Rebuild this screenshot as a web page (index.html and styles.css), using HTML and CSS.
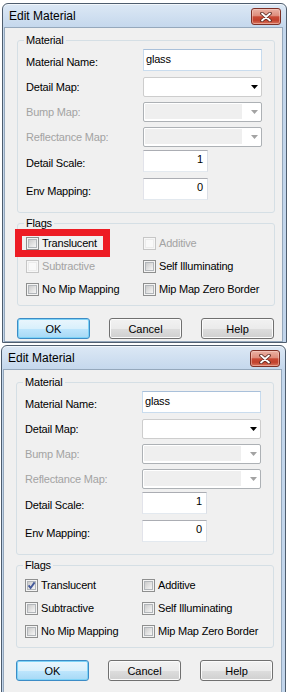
FILE: index.html
```html
<!DOCTYPE html>
<html>
<head>
<meta charset="utf-8">
<title>Edit Material</title>
<link rel="stylesheet" href="styles.css">
</head>
<body>
<div class="window w1">
  <div class="titlebar">
    <span class="title">Edit Material</span>
    <span class="close"><svg width="12" height="10" viewBox="0 0 12 10"><path d="M2 1.5 L10 8.5 M10 1.5 L2 8.5" stroke="#5b2a22" stroke-width="3.6" stroke-linecap="round"/><path d="M2 1.5 L10 8.5 M10 1.5 L2 8.5" stroke="#ffffff" stroke-width="1.8" stroke-linecap="round"/></svg></span>
  </div>
  <div class="client">
    <fieldset class="group material">
      <legend>Material</legend>
      <div class="rows">
        <div class="row r-name"><span class="lbl lbl-edit">Material Name:</span><div class="edit wide focus">glass</div></div>
        <div class="row r-detail"><span class="lbl">Detail Map:</span><div class="combo"><svg class="arrow" width="7" height="4" viewBox="0 0 7 4"><polygon points="0,0 7,0 3.5,4" fill="#000"/></svg></div></div>
        <div class="row r-bump"><span class="lbl dis">Bump Map:</span><div class="combo disabled"><span class="combo-field"></span><svg class="arrow" width="7" height="4" viewBox="0 0 7 4"><polygon points="0,0 7,0 3.5,4" fill="#a3a3a3"/></svg></div></div>
        <div class="row r-refl"><span class="lbl dis">Reflectance Map:</span><div class="combo disabled"><span class="combo-field"></span><svg class="arrow" width="7" height="4" viewBox="0 0 7 4"><polygon points="0,0 7,0 3.5,4" fill="#a3a3a3"/></svg></div></div>
        <div class="row r-scale"><span class="lbl lbl-edit">Detail Scale:</span><div class="edit num">1</div></div>
        <div class="row r-env"><span class="lbl lbl-edit">Env Mapping:</span><div class="edit num">0</div></div>
      </div>
    </fieldset>
    <fieldset class="group flags">
      <legend>Flags</legend>
      <div class="checks">
        <div class="chk annotated"><span class="cb"></span><span>Translucent</span><span class="annot"></span></div>
        <div class="chk dis"><span class="cb off"></span><span>Additive</span></div>
        <div class="chk dis"><span class="cb off"></span><span>Subtractive</span></div>
        <div class="chk"><span class="cb"></span><span>Self Illuminating</span></div>
        <div class="chk"><span class="cb"></span><span>No Mip Mapping</span></div>
        <div class="chk"><span class="cb"></span><span>Mip Map Zero Border</span></div>
      </div>
    </fieldset>
    <div class="buttons">
      <button class="btn default">OK</button>
      <button class="btn">Cancel</button>
      <button class="btn">Help</button>
    </div>
  </div>
</div>

<div class="window w2">
  <div class="titlebar">
    <span class="title">Edit Material</span>
    <span class="close"><svg width="12" height="10" viewBox="0 0 12 10"><path d="M2 1.5 L10 8.5 M10 1.5 L2 8.5" stroke="#5b2a22" stroke-width="3.6" stroke-linecap="round"/><path d="M2 1.5 L10 8.5 M10 1.5 L2 8.5" stroke="#ffffff" stroke-width="1.8" stroke-linecap="round"/></svg></span>
  </div>
  <div class="client">
    <fieldset class="group material">
      <legend>Material</legend>
      <div class="rows">
        <div class="row r-name"><span class="lbl lbl-edit">Material Name:</span><div class="edit wide focus">glass</div></div>
        <div class="row r-detail"><span class="lbl">Detail Map:</span><div class="combo"><svg class="arrow" width="7" height="4" viewBox="0 0 7 4"><polygon points="0,0 7,0 3.5,4" fill="#000"/></svg></div></div>
        <div class="row r-bump"><span class="lbl dis">Bump Map:</span><div class="combo disabled"><span class="combo-field"></span><svg class="arrow" width="7" height="4" viewBox="0 0 7 4"><polygon points="0,0 7,0 3.5,4" fill="#a3a3a3"/></svg></div></div>
        <div class="row r-refl"><span class="lbl dis">Reflectance Map:</span><div class="combo disabled"><span class="combo-field"></span><svg class="arrow" width="7" height="4" viewBox="0 0 7 4"><polygon points="0,0 7,0 3.5,4" fill="#a3a3a3"/></svg></div></div>
        <div class="row r-scale"><span class="lbl lbl-edit">Detail Scale:</span><div class="edit num">1</div></div>
        <div class="row r-env"><span class="lbl lbl-edit">Env Mapping:</span><div class="edit num">0</div></div>
      </div>
    </fieldset>
    <fieldset class="group flags">
      <legend>Flags</legend>
      <div class="checks">
        <div class="chk"><span class="cb on"><svg class="tick" width="13" height="13" viewBox="0 0 13 13"><path d="M3.6 6.4 L5.6 9 L9.6 3.4" fill="none" stroke="#44599a" stroke-width="1.9"/></svg></span><span>Translucent</span></div>
        <div class="chk"><span class="cb"></span><span>Additive</span></div>
        <div class="chk"><span class="cb"></span><span>Subtractive</span></div>
        <div class="chk"><span class="cb"></span><span>Self Illuminating</span></div>
        <div class="chk"><span class="cb"></span><span>No Mip Mapping</span></div>
        <div class="chk"><span class="cb"></span><span>Mip Map Zero Border</span></div>
      </div>
    </fieldset>
    <div class="buttons">
      <button class="btn default">OK</button>
      <button class="btn">Cancel</button>
      <button class="btn">Help</button>
    </div>
  </div>
</div>
</body>
</html>
```

FILE: styles.css
```css
html, body {
  margin: 0;
  padding: 0;
  background: #ffffff;
}
body {
  height: 692px;
  overflow: hidden;
  font-family: "Liberation Sans", Arial, sans-serif;
  font-size: 11px;
  letter-spacing: -0.2px;
  color: #000;
}

.window {
  width: 285px;
  box-sizing: border-box;
  border: 1px solid #4e5d6e;
  border-radius: 6px 6px 0 0;
  background: linear-gradient(#dce8f5, #c4d7ec 24px, #c2d5eb);
  padding: 0 3px 0 1px;
  box-shadow: inset 0 1px 0 #f2f7fc;
}
.w1 {
  margin: 3px 0 0 2px;
}
.w2 {
  margin: 2px 0 0 1px;
}

.titlebar {
  height: 23px;
  display: flex;
  justify-content: space-between;
  align-items: flex-start;
}
.title {
  font-family: "Liberation Sans", Arial, sans-serif;
  font-size: 12px;
  letter-spacing: 0;
  line-height: 15px;
  padding: 5px 0 0 5px;
  color: #000;
}
.close {
  width: 30px;
  height: 17px;
  box-sizing: border-box;
  margin: 4px 2px 0 0;
  border: 1px solid #7d3026;
  border-radius: 3px;
  background: linear-gradient(#eab1a4 0%, #de8d7c 45%, #c84a36 52%, #c2412d 75%, #d8755f 100%);
  box-shadow: inset 0 0 0 1px rgba(255, 220, 210, 0.45);
  display: flex;
  align-items: center;
  justify-content: center;
}
.close svg {
  display: block;
}

.client {
  background: #f0f0f0;
  border: 1px solid #95a8bc;
  padding: 0 0 2px 0;
}
.w2 .client {
  padding-bottom: 30px;
}

/* group boxes */
.group {
  margin: 0 7px 0 12px;
  padding: 0;
  border: 1px solid #d5dfe5;
  border-radius: 3px;
  min-width: 0;
}
.group legend {
  margin-left: 6px;
  padding: 0 2px;
  font-size: 11px;
  line-height: 13px;
}
.material {
  margin-top: 6px;
}
.flags {
  margin-top: 4px;
}

.rows {
  display: flex;
  flex-direction: column;
  padding: 2px 0 12px 8px;
}
.row {
  display: flex;
  align-items: center;
}
.r-name { height: 22px; }
.r-detail { height: 20px; margin-top: 6px; }
.r-bump { height: 20px; margin-top: 5px; }
.r-refl { height: 20px; margin-top: 5px; }
.r-scale { height: 22px; margin-top: 3px; }
.r-env { height: 22px; margin-top: 6px; }

.lbl {
  width: 117px;
  flex: none;
  line-height: 13px;
}
.lbl-edit {
  padding-top: 5px;
}
.dis {
  color: #a3a3a3;
}

.edit {
  box-sizing: border-box;
  height: 22px;
  border: 1px solid;
  border-color: #abadb3 #dbdfe6 #e3e9ef #e2e3ea;
  background: #fff;
  display: flex;
  align-items: center;
  padding: 0 2px 1px 2px;
  line-height: 13px;
}
.edit.wide {
  width: 119px;
}
.edit.focus {
  border-color: #a9c0da #c7dbee #c9dcee #c7dbee;
}
.edit.num {
  width: 65px;
  justify-content: flex-end;
  padding-right: 4px;
  padding-bottom: 3px;
}

.combo {
  box-sizing: border-box;
  width: 119px;
  height: 20px;
  border: 1px solid #cdcdcd;
  border-radius: 2px;
  background: #fff;
  display: flex;
  align-items: center;
  justify-content: flex-end;
  padding: 0 3px 0 1px;
}
.combo.disabled {
  border-color: #adb1b5;
  justify-content: space-between;
}
.combo-field {
  width: 97px;
  height: 15px;
  background: #efefef;
  align-self: flex-start;
  margin-top: 1px;
}
.arrow {
  display: block;
  flex: none;
}

/* check boxes */
.checks {
  display: grid;
  grid-template-columns: 117px 1fr;
  grid-auto-rows: 23px;
  padding: 2px 0 4px 8px;
}
.chk {
  display: flex;
  align-items: center;
  line-height: 13px;
}
.cb {
  width: 13px;
  height: 13px;
  box-sizing: border-box;
  border: 1px solid #8e8f8f;
  background: #f4f4f4;
  padding: 1px;
  margin-right: 3px;
  flex: none;
}
.cb::before {
  content: "";
  display: block;
  width: 9px;
  height: 9px;
  box-sizing: border-box;
  border: 1px solid #b2b6ba;
  background: linear-gradient(135deg, #cbcbcb, #f6f6f6);
}
.cb.off {
  border-color: #c6c6c6;
  background: #f7f7f7;
}
.cb.off::before {
  border-color: #ececec;
  background: #f9f9f9;
}
.cb.on {
  position: relative;
}
.tick {
  position: absolute;
  left: -1px;
  top: -1px;
}

.annotated {
  position: relative;
}
.annot {
  position: absolute;
  left: -11px;
  top: -3px;
  width: 95px;
  height: 28px;
  box-sizing: border-box;
  border: 7px solid #ed1c24;
}

/* buttons */
.buttons {
  display: flex;
  justify-content: space-between;
  margin: 12px 8px 0 12px;
}
.btn {
  width: 73px;
  height: 21px;
  box-sizing: border-box;
  padding: 0;
  font-family: "Liberation Sans", Arial, sans-serif;
  font-size: 11px;
  color: #000;
  border: 1px solid #707070;
  border-radius: 3px;
  background: linear-gradient(#f2f2f2 0%, #ebebeb 50%, #dddddd 51%, #cfcfcf 100%);
  box-shadow: inset 0 0 0 1px #fbfbfb;
}
.btn.default {
  border-color: #3c8cc6;
  background: linear-gradient(#eaf6fd 0%, #d9f0fc 50%, #bee6fd 51%, #a7d9f5 100%);
  box-shadow: inset 0 0 0 1px #7ed3f7;
}
```
